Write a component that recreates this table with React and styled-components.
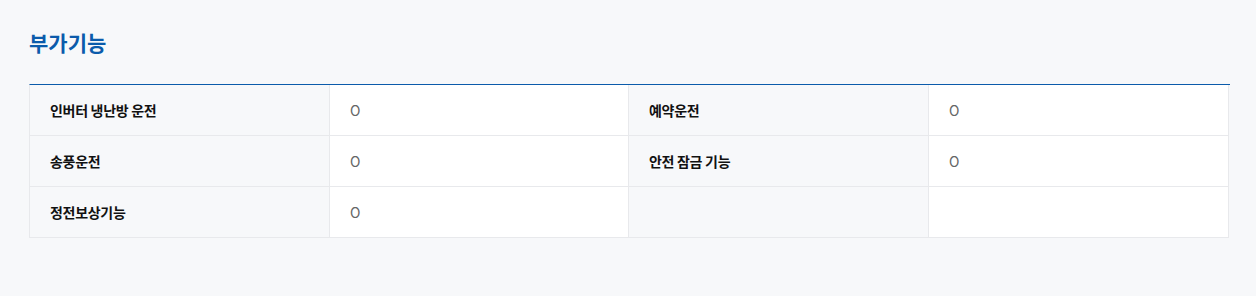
import React from 'react';
import styled, { createGlobalStyle } from 'styled-components';

const rows = [
    [
        { label: '인버터 냉난방 운전', value: 'O' },
        { label: '예약운전', value: 'O' },
    ],
    [
        { label: '송풍운전', value: 'O' },
        { label: '안전 잠금 기능', value: 'O' },
    ],
    [
        { label: '정전보상기능', value: 'O' },
        { label: '', value: '' },
    ],
];

const GlobalStyle = createGlobalStyle`
    body {
        margin: 0;
        background: #f7f8fa;
        font-family: "Noto Sans CJK KR", "Noto Sans", sans-serif;
    }
`;

const App = () => (
    <>
        <GlobalStyle />
        <Section>
            <Title>부가기능</Title>
            <Table>
                {rows.flat().map((item, i) => (
                    <React.Fragment key={i}>
                        <Label>{item.label}</Label>
                        <Value>{item.value}</Value>
                    </React.Fragment>
                ))}
            </Table>
        </Section>
    </>
);

const Section = styled.section`
    padding: 27px 27px 58px 29px;
`;

const Title = styled.h2`
    margin: 0 0 27px 0;
    font-size: 21px;
    line-height: 30px;
    font-weight: 700;
    color: #0b5bab;
`;

const Table = styled.div`
    display: grid;
    grid-template-columns: 300px 299px 300px 300px;
    width: 1200px;
    border-top: 1px solid #0b5bab;
    border-left: 1px solid #e8e9ec;
`;

const Cell = styled.div`
    display: flex;
    align-items: center;
    height: 51px;
    padding: 0 20px;
    box-sizing: border-box;
    border-right: 1px solid #e8e9ec;
    border-bottom: 1px solid #e8e9ec;
`;

const Label = styled(Cell)`
    background: #f7f8fa;
    font-size: 14px;
    font-weight: 700;
    color: #111;
    letter-spacing: -0.3px;
`;

const Value = styled(Cell)`
    background: #fff;
    font-size: 14px;
    color: #666;
`;

export default App;
